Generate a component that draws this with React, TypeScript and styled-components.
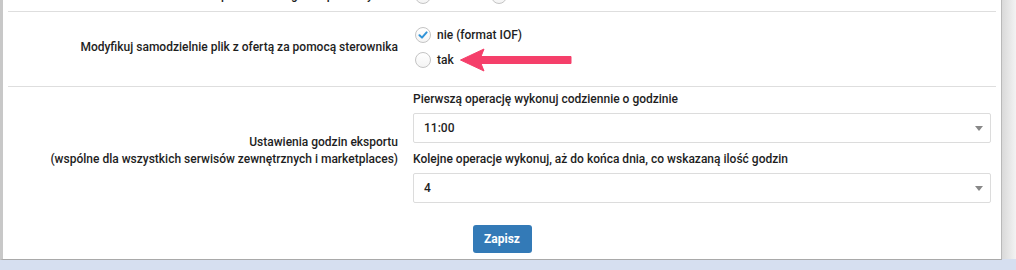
import React from 'react'
import styled, { createGlobalStyle } from 'styled-components'

const GlobalStyle = createGlobalStyle`
  html, body {
    margin: 0;
    padding: 0;
    background: #d6dff0;
    font-family: Roboto, "Liberation Sans", Arial, sans-serif;
  }
`

const Page = styled.div`
  display: flex;
  height: 260px;
`

const Panel = styled.div`
  width: 988px;
  height: 259px;
  background: #fff;
  border-left: 3px solid #c8c8c8;
  border-right: 1px solid #b9b9b9;
  border-bottom: 1px solid #a9a9a9;
  display: flex;
  flex-direction: column;
  padding: 0 5px;
  box-sizing: content-box;
  flex-shrink: 0;
`

const Shadow = styled.div`
  flex: 1;
  height: 259px;
  background: linear-gradient(to right, #d9d9d9, #f3f3f3);
`

const Row = styled.div<{ $pt: number; $pb: number; $line?: boolean }>`
  display: grid;
  grid-template-columns: 405px 1fr;
  align-items: center;
  padding: ${p => p.$pt}px 5px ${p => p.$pb}px 0;
  border-bottom: ${p => (p.$line ? '1px solid #dedede' : 'none')};
`

// scrolled past: only the bottom few pixels of this row are visible
const TopRow = styled(Row)`
  box-sizing: border-box;
  height: 12px;
  flex-shrink: 0;
  overflow: hidden;
  align-items: end;
  align-content: end;
`

const Text = styled.div`
  font-size: 12px;
  font-weight: 500;
  color: #1e1e1e;
`

const Label = styled(Text)`
  text-align: right;
  padding-right: 15px;
  line-height: 17px;
`

const Options = styled.div<{ $row?: boolean }>`
  display: flex;
  flex-direction: ${p => (p.$row ? 'row' : 'column')};
  gap: ${p => (p.$row ? 16 : 9)}px;
  padding-left: 2px;
`

const Option = styled.label`
  display: flex;
  align-items: center;
  gap: 6px;
  font-size: 12px;
  font-weight: 500;
  color: #1e1e1e;
  height: 16px;
`

const Circle = styled.span`
  width: 14px;
  height: 14px;
  border-radius: 50%;
  border: 1px solid #c4c4c4;
  background: linear-gradient(#fff, #f4f4f4);
  display: inline-flex;
  align-items: center;
  justify-content: center;
  flex-shrink: 0;
`

const Fields = styled.div`
  display: flex;
  flex-direction: column;
`

const FieldLabel = styled(Text)`
  line-height: 16px;
  margin-bottom: 6px;
`

const Select = styled.div`
  height: 28px;
  border: 1px solid #dcdcdc;
  border-radius: 2px;
  display: flex;
  align-items: center;
  justify-content: space-between;
  padding: 0 7px 0 10px;
  font-size: 12px;
  font-weight: 500;
  color: #1e1e1e;
  margin-bottom: 8px;
`

const Caret = styled.span`
  width: 0;
  height: 0;
  border-left: 4px solid transparent;
  border-right: 4px solid transparent;
  border-top: 5px solid #888;
`

const ButtonRow = styled.div`
  display: flex;
  justify-content: center;
  padding-top: 14px;
`

const Button = styled.button`
  width: 59px;
  height: 28px;
  border: none;
  border-radius: 3px;
  background: #337ab7;
  color: #fff;
  font-family: Roboto, "Liberation Sans", Arial, sans-serif;
  font-size: 12px;
  font-weight: 700;
  padding: 0;
`

const Check = () => (
  <svg width="10" height="10" viewBox="0 0 10 10">
    <path d="M1.5 5.2 L4 7.6 L8.6 2.4" fill="none" stroke="#2f93d8" strokeWidth="2" strokeLinecap="round" strokeLinejoin="round" />
  </svg>
)

const Arrow = () => (
  <svg width="112" height="24" viewBox="0 0 112 24">
    <path d="M0.5 12 L24 1 L21 8.5 L111 8.5 L111 15.5 L21 15.5 L24 23 Z" fill="#f53f6a" strokeLinejoin="round" stroke="#f53f6a" strokeWidth="1" />
  </svg>
)

function App() {
  return (
    <>
      <GlobalStyle />
      <Page>
        <Panel>
          <TopRow $pt={0} $pb={7} $line>
            <Label>Format pliku bazowego dla porównywań:</Label>
            <Options $row>
              <Option><Circle />IOF 3.0</Option>
              <Option><Circle />IOF 2.0</Option>
            </Options>
          </TopRow>
          <Row $pt={15} $pb={18} $line>
            <Label>Modyfikuj samodzielnie plik z ofertą za pomocą sterownika</Label>
            <Options>
              <Option><Circle><Check /></Circle>nie (format IOF)</Option>
              <Option><Circle />tak<Arrow /></Option>
            </Options>
          </Row>
          <Row $pt={4} $pb={0}>
            <Label>
              Ustawienia godzin eksportu
              <br />
              (wspólne dla wszystkich serwisów zewnętrznych i marketplaces)
            </Label>
            <Fields>
              <FieldLabel>Pierwszą operację wykonuj codziennie o godzinie</FieldLabel>
              <Select>11:00<Caret /></Select>
              <FieldLabel>Kolejne operacje wykonuj, aż do końca dnia, co wskazaną ilość godzin</FieldLabel>
              <Select>4<Caret /></Select>
            </Fields>
          </Row>
          <ButtonRow>
            <Button>Zapisz</Button>
          </ButtonRow>
        </Panel>
        <Shadow />
      </Page>
    </>
  )
}

export default App
